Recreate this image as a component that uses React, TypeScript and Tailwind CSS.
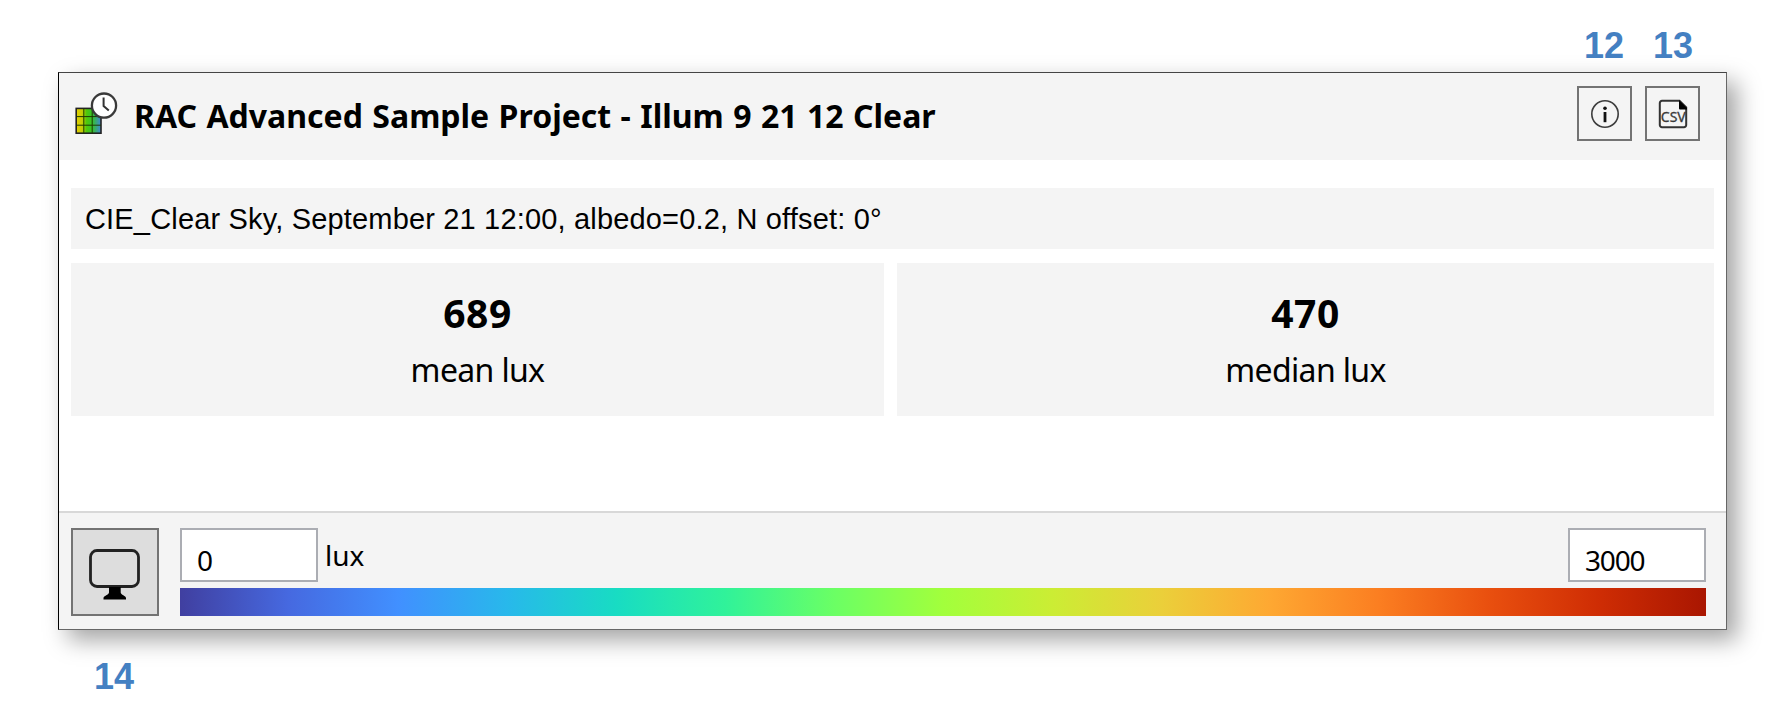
const segoe = "font-['Noto_Sans',sans-serif]";

function GridClockIcon() {
  return (
    <svg width="44" height="44" viewBox="0 0 44 44" className="shrink-0">
      <defs>
        <linearGradient id="cells" x1="0" x2="1" y1="0" y2="0">
          <stop offset="0" stopColor="#e3cf00" />
          <stop offset="0.25" stopColor="#c3cc05" />
          <stop offset="0.42" stopColor="#4fc80a" />
          <stop offset="0.65" stopColor="#35c32a" />
          <stop offset="1" stopColor="#3f86d8" />
        </linearGradient>
      </defs>
      <rect x="1.2" y="17.4" width="24.8" height="24.8" fill="url(#cells)" stroke="#222" strokeWidth="1.6" />
      <path d="M8.8 17v26M17.200 17v26M1 25.6h25M1 34.2h25" stroke="#1d3a00" strokeWidth="1" />
      <circle cx="29" cy="14.6" r="12.1" fill="#fff" stroke="#3a3a3a" strokeWidth="2.3" />
      <path d="M28.6 6.500v8.500l5.200 4.600" fill="none" stroke="#333" strokeWidth="2" />
    </svg>
  );
}

function InfoIcon() {
  return (
    <svg width="30" height="30" viewBox="0 0 30 30">
      <circle cx="15" cy="15" r="13.2" fill="none" stroke="#3c3c3c" strokeWidth="1.6" />
      <circle cx="15" cy="9.2" r="1.8" fill="#111" />
      <path d="M15 13v10.2" stroke="#111" strokeWidth="2.800" />
    </svg>
  );
}

function CsvIcon() {
  return (
    <svg width="30" height="30" viewBox="0 0 30 30">
      <path d="M4 1.8h17.5l6.7 6.7V26a2.2 2.2 0 0 1-2.2 2.2H4A2.2 2.2 0 0 1 1.8 26V4A2.2 2.2 0 0 1 4 1.8z" fill="none" stroke="#333" strokeWidth="2" />
      <path d="M21 1l8 8v1.400h-7a1 1 0 0 1-1-1z" fill="#000" />
      <text x="15.3" y="23" textAnchor="middle" textLength="25" lengthAdjust="spacingAndGlyphs" fontFamily="Noto Sans" fontSize="14.500" fill="#3a3a3a" stroke="#3a3a3a" strokeWidth="0.3">CSV</text>
    </svg>
  );
}

function MonitorIcon() {
  return (
    <svg width="54" height="52" viewBox="0 0 54 52">
      <rect x="2.500" y="1.500" width="48" height="36" rx="6.500" fill="none" stroke="#222" strokeWidth="2.800" />
      <path d="M21 38h11.700v5.500c0 2.500 5.300 3.300 5.300 5.500v1.500H15.500V49c0-2.200 5.500-3 5.500-5.500z" fill="#000" />
    </svg>
  );
}

function Stat({ value, label }: { value: string; label: string }) {
  return (
    <div className={`flex flex-col items-center bg-[#f4f4f4] pt-[25px] ${segoe}`}>
      <div className="text-[39px] leading-[50px] font-bold tracking-[0.6px]">{value}</div>
      <div className="mt-[8px] text-[32px] leading-[48px] tracking-[-0.65px]">{label}</div>
    </div>
  );
}

function Bound({ value }: { value: string }) {
  return (
    <div className="h-[54px] w-[138px] border-2 border-[#abadb3] bg-white pt-[10px] pl-[15px] text-[28px] leading-[40px] tracking-[-1.2px]">
      {value}
    </div>
  );
}

export default function App() {
  return (
    <div className="h-[728px] w-[1785px] overflow-hidden bg-white font-['Liberation_Sans',sans-serif] text-black">
      <div className="flex h-[72px] justify-end pt-[25px] pr-[92px] text-[36px] leading-[41px] font-bold text-[#4480c2]">
        <span className="w-[69px]">12</span>
        <span className="w-[40px]">13</span>
      </div>

      <main className="ml-[58px] flex h-[558px] w-[1669px] flex-col border border-t-[#444] border-r-[#666] border-b-[#666] border-l-black bg-white shadow-[10px_10px_22px_rgba(0,0,0,0.36)]">
        <header className="flex h-[87px] shrink-0 items-start bg-[#f4f4f4] pl-[16px]">
          <div className="pt-[18px]">
            <GridClockIcon />
          </div>
          <h1 className={`ml-[15px] pt-[18px] text-[32px] leading-[50px] font-bold whitespace-nowrap [word-spacing:1.1px] ${segoe}`}>
            RAC Advanced Sample Project - Illum 9 21 12 Clear
          </h1>
          <div className="mt-[13px] mr-[26px] ml-auto flex gap-[13px]">
            <button className="flex size-[55px] items-center justify-center border-2 border-[#737373]">
              <InfoIcon />
            </button>
            <button className="flex size-[55px] items-center justify-center border-2 border-[#737373]">
              <CsvIcon />
            </button>
          </div>
        </header>

        <section className="mx-[12px] mt-[28px] flex-1">
          <p className="h-[61px] bg-[#f4f4f4] pl-[14px] text-[29px] leading-[62px] tracking-[0.17px] whitespace-nowrap">
            CIE_Clear Sky, September 21 12:00, albedo=0.2, N offset: 0°
          </p>
          <div className="mt-[14px] grid h-[153px] grid-cols-[813px_817px] gap-[13px]">
            <Stat value="689" label="mean lux" />
            <Stat value="470" label="median lux" />
          </div>
        </section>

        <footer className="flex h-[118px] shrink-0 border-t-2 border-[#d8d8d8] bg-[#f4f4f4] pt-[15px] pl-[12px]">
          <button className="flex size-[88px] items-center justify-center border-2 border-[#737373] bg-[#dddddd] pt-[5px]">
            <MonitorIcon />
          </button>
          <div className="ml-[21px] w-[1526px]">
            <div className={`flex h-[54px] items-start ${segoe}`}>
              <Bound value="0" />
              <span className="ml-[7px] pt-[7px] text-[28px] leading-[40px]">lux</span>
              <div className="ml-auto">
                <Bound value="3000" />
              </div>
            </div>
            <div className="mt-[6px] h-[28px] bg-[linear-gradient(to_right,#403fa0_0%,#4669e0_7.1%,#4190ff_14.3%,#28b8eb_21.4%,#18dcc3_28.6%,#30f29a_35.7%,#6bff64_42.9%,#a2ff3c_50%,#cbed34_57.1%,#ebcf3a_64.3%,#fea832_71.4%,#fb7e21_78.6%,#e9500f_85.7%,#cf2d04_92.9%,#a91601_100%)]" />
          </div>
        </footer>
      </main>

      <div className="pt-[26px] pl-[94px] text-[36px] leading-[41px] font-bold text-[#4480c2]">14</div>
    </div>
  );
}
